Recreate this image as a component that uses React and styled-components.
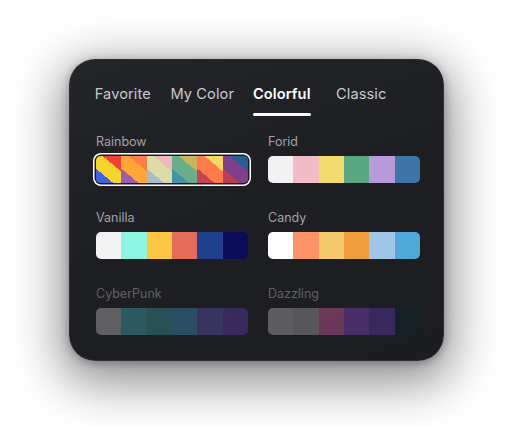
import React from "react";
import styled, { createGlobalStyle } from "styled-components";

const Global = createGlobalStyle`
  html, body {
    margin: 0;
    background: #ffffff;
  }
  body {
    font-family: Inter, "Noto Sans", "Liberation Sans", sans-serif;
  }
`;

const Page = styled.div`
  width: 512px;
  height: 426px;
  padding: 59px 0 0 69px;
  box-sizing: border-box;
`;

const Card = styled.div`
  width: 375px;
  height: 302px;
  box-sizing: border-box;
  border-radius: 26px;
  background: linear-gradient(160deg, #242529 0%, #1e1f23 45%, #1c1d21 100%);
  border: 1px solid rgba(255, 255, 255, 0.07);
  box-shadow: 0 14px 48px 10px rgba(0, 0, 0, 0.42), 0 2px 10px rgba(0, 0, 0, 0.3);
  padding: 24px 24px 0 26px;
  display: flex;
  flex-direction: column;
`;

const Tabs = styled.div`
  display: grid;
  grid-template-columns: repeat(4, 79.5px);
  margin-left: -13px;
`;

const Tab = styled.div`
  display: flex;
  flex-direction: column;
  align-items: center;
  font-size: 14.6px;
  line-height: 20px;
  letter-spacing: 0.1px;
  color: ${(p) => (p.$active ? "#ffffff" : "#c9c9cd")};
  font-weight: ${(p) => (p.$active ? 600 : 400)};
  span {
    position: relative;
    padding-bottom: 12px;
  }
  span::after {
    content: "";
    display: ${(p) => (p.$active ? "block" : "none")};
    position: absolute;
    left: 0;
    right: 0;
    bottom: 0;
    height: 3px;
    border-radius: 2px;
    background: #ffffff;
  }
`;

const Grid = styled.div`
  margin-top: 18px;
  display: grid;
  grid-template-columns: 152px 152px;
  column-gap: 20px;
  row-gap: 27px;
`;

const Item = styled.div`
  display: flex;
  flex-direction: column;
  gap: 6px;
  opacity: ${(p) => (p.$faded ? 0.5 : 1)};
`;

const Label = styled.div`
  font-size: 12.5px;
  line-height: 16px;
  color: #a2a2a7;
`;

const Swatch = styled.div`
  height: 27px;
  border-radius: 5px;
  overflow: hidden;
  display: grid;
  grid-template-columns: repeat(6, 1fr);
  box-shadow: ${(p) =>
    p.$selected ? "0 0 0 1.5px #1e1f23, 0 0 0 3px #ffffff" : "none"};
`;

const Chip = styled.div`
  background: ${(p) => p.$bg};
`;

const stripe = (top, mid, bottom) =>
  `linear-gradient(40deg, ${bottom} 0 30%, ${mid} 30% 68%, ${top} 68% 100%)`;

const palettes = [
  {
    name: "Rainbow",
    selected: true,
    colors: [
      stripe("#f24236", "#f5d52a", "#3f63e6"),
      stripe("#ff7d48", "#ffa736", "#9b5eab"),
      stripe("#f1b7bf", "#dcdcab", "#a8bdcc"),
      stripe("#c6b55c", "#69ae8a", "#4592a6"),
      stripe("#f6d862", "#ff7b4a", "#c5434c"),
      stripe("#255f92", "#7f3f8c", "#b93f54"),
    ],
  },
  {
    name: "Forid",
    colors: ["#f2f2f2", "#f1bcc6", "#f2da6b", "#58a682", "#b99ad9", "#3d76a6"],
  },
  {
    name: "Vanilla",
    colors: ["#f3f3f3", "#8ff5e3", "#fdc643", "#e46c59", "#203f8c", "#0a0c5a"],
  },
  {
    name: "Candy",
    colors: ["#ffffff", "#fd9468", "#f3c96c", "#ef9e3c", "#a0c5e6", "#4fa7da"],
  },
  {
    name: "CyberPunk",
    faded: true,
    colors: ["#a0a0a2", "#3b949c", "#35808c", "#3b7ea8", "#55489c", "#553498"],
  },
  {
    name: "Dazzling",
    faded: true,
    colors: ["#9d9c9e", "#929194", "#b5548c", "#7540ac", "#553498", "#0f242c"],
  },
];

const tabs = ["Favorite", "My Color", "Colorful", "Classic"];

export default function App() {
  return (
    <Page>
      <Global />
      <Card>
        <Tabs>
          {tabs.map((t) => (
            <Tab key={t} $active={t === "Colorful"}>
              <span>{t}</span>
            </Tab>
          ))}
        </Tabs>
        <Grid>
          {palettes.map((p) => (
            <Item key={p.name} $faded={p.faded}>
              <Label>{p.name}</Label>
              <Swatch $selected={p.selected}>
                {p.colors.map((c, i) => (
                  <Chip key={i} $bg={c} />
                ))}
              </Swatch>
            </Item>
          ))}
        </Grid>
      </Card>
    </Page>
  );
}
